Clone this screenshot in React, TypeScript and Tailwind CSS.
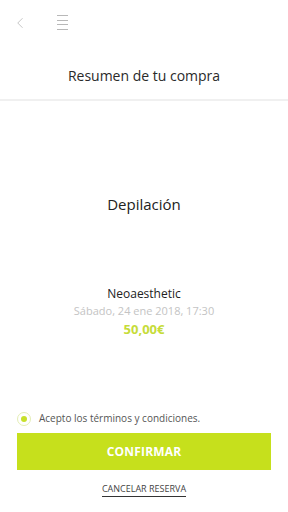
import { ChevronLeft } from 'lucide-react'

const font = { fontFamily: '"Open Sans", "Liberation Sans", sans-serif' }

/**
 * Purchase summary screen.
 */
export default function App() {
  return (
    <div
      className="flex h-[512px] w-[288px] flex-col bg-white text-[#222]"
      style={font}
    >
      {/* top bar */}
      <div className="flex h-[45px] items-center gap-[28px] pl-[11px]">
        <ChevronLeft className="h-[18px] w-[18px] text-[#c0c0c0]" strokeWidth={1.2} />
        <div className="flex w-[11px] flex-col gap-[3.5px]">
          <span className="h-px w-full bg-[#b8b8b8]" />
          <span className="h-px w-full bg-[#b8b8b8]" />
          <span className="h-px w-full bg-[#b8b8b8]" />
          <span className="h-px w-full bg-[#b8b8b8]" />
        </div>
      </div>

      <h1 className="mt-[21px] text-center text-[14px] leading-[20px] text-[#2a2a2a]">
        Resumen de tu compra
      </h1>
      <div className="mt-[13px] h-[2px] bg-[#f0f0f0]" />

      <div className="flex flex-1 flex-col items-center">
        <p className="mt-[93px] text-[15px] leading-[20px] text-[#222]">Depilación</p>
        <p className="mt-[72px] text-[12px] leading-[16px] text-[#222]">Neoaesthetic</p>
        <p className="mt-[1px] text-[11px] leading-[16px] text-[#c4c4c4]">
          Sábado, 24 ene 2018, 17:30
        </p>
        <p className="mt-[1px] text-[13px] font-bold leading-[18px] text-[#c6dc3a]">
          50,00€
        </p>
      </div>

      <div className="px-[17px] pb-[14px]">
        <label className="flex items-center gap-[8px]">
          <span className="flex h-[14px] w-[14px] items-center justify-center rounded-full border border-[#e4eeb4]">
            <span className="h-[6px] w-[6px] rounded-full bg-[#c7e02a]" />
          </span>
          <span className="text-[10px] text-[#555]">Acepto los términos y condiciones.</span>
        </label>
        <button
          type="button"
          className="mt-[7px] h-[37px] w-full bg-[#c6e01c] text-[12px] font-bold tracking-[0.2px] text-white"
        >
          CONFIRMAR
        </button>
        <div className="mt-[4px] text-center">
          <span className="border-b border-[#333] pb-[1px] text-[9px] text-[#444]">
            CANCELAR RESERVA
          </span>
        </div>
      </div>
    </div>
  )
}
